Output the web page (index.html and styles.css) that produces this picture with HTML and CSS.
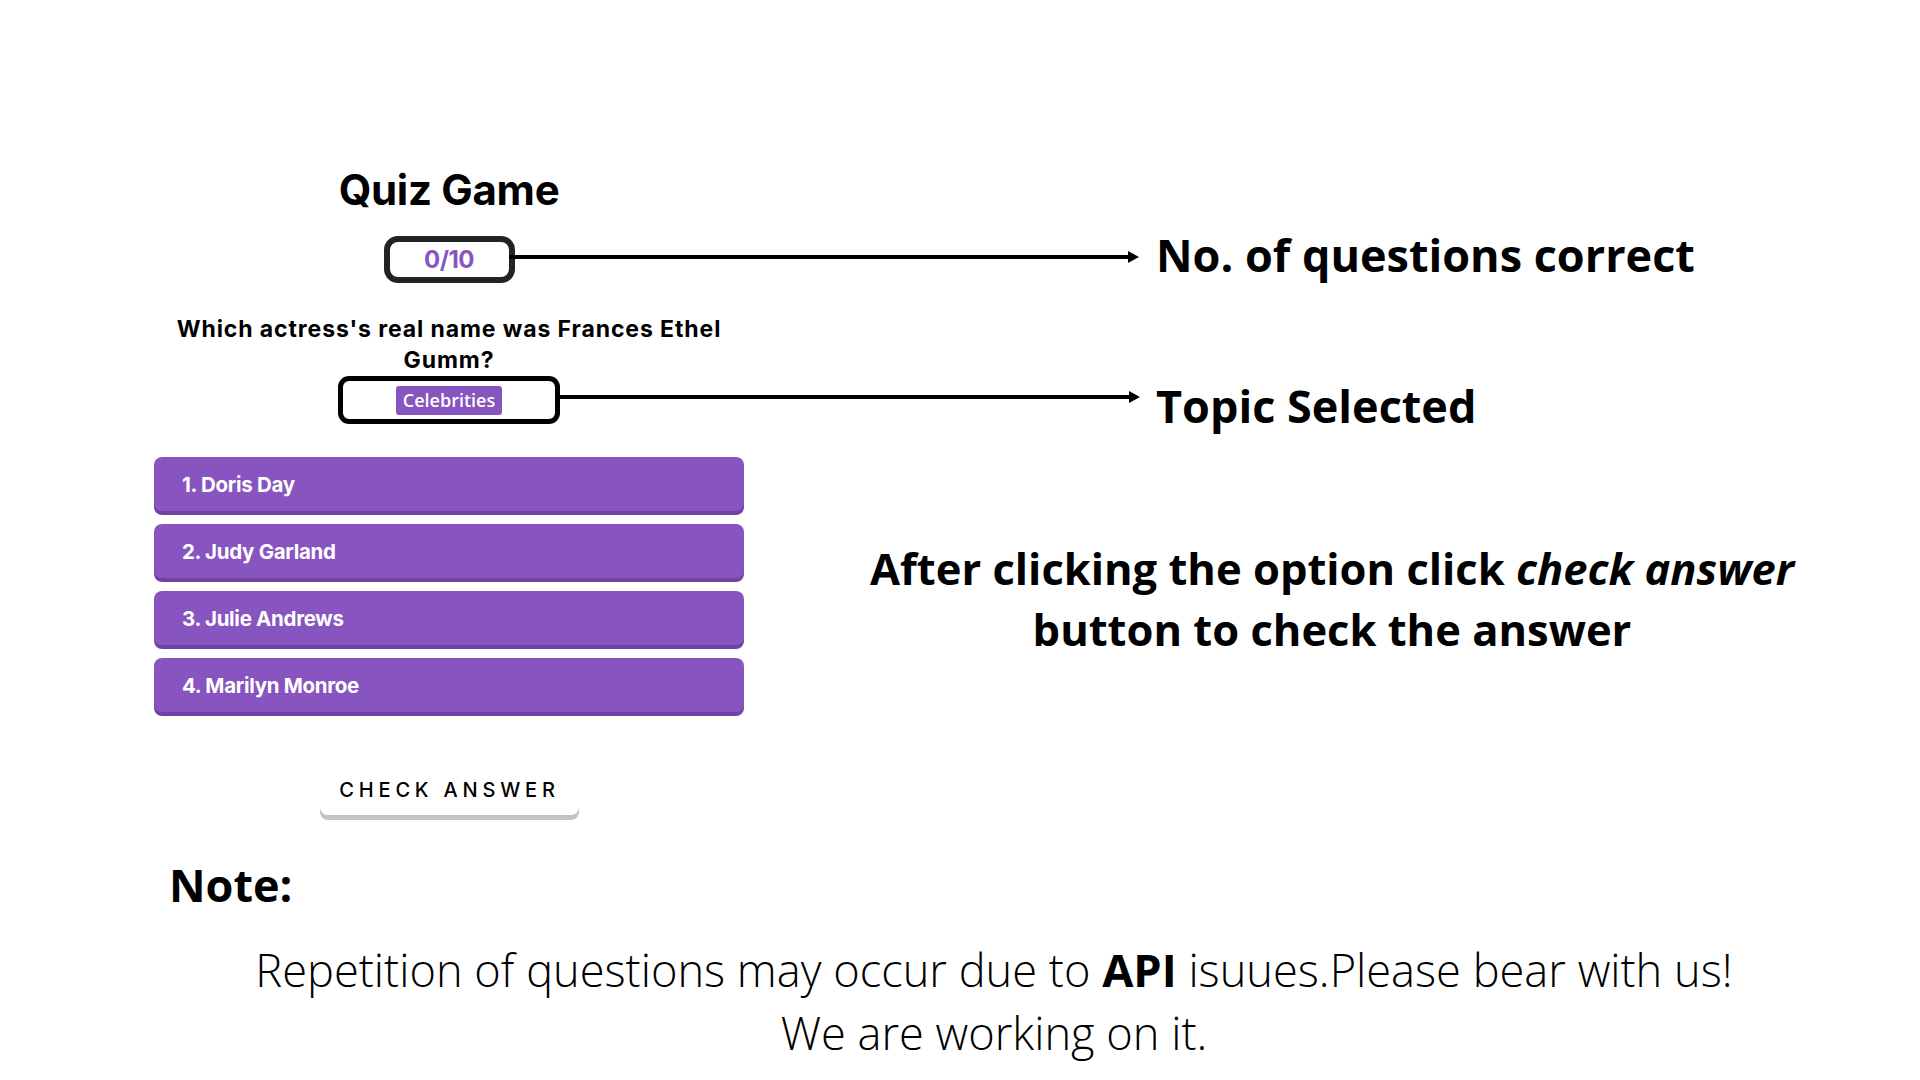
FILE: index.html
```html
<!DOCTYPE html>
<html lang="en">
<head>
<meta charset="utf-8">
<title>Quiz Game</title>
<link rel="stylesheet" href="styles.css">
</head>
<body>
<main class="page">
  <section class="quiz">
    <h1 class="quiz-title">Quiz Game</h1>

    <div class="score-cell">
      <div class="score-box arrow arrow-long">0/10</div>
    </div>
    <p class="label label-score">No. of questions correct</p>

    <p class="question">Which actress's real name was Frances Ethel<br>Gumm?</p>

    <div class="topic-cell">
      <div class="topic-box arrow arrow-short"><span class="badge">Celebrities</span></div>
    </div>
    <p class="label label-topic">Topic Selected</p>

    <ol class="options">
      <li class="option">1. Doris Day</li>
      <li class="option">2. Judy Garland</li>
      <li class="option">3. Julie Andrews</li>
      <li class="option">4. Marilyn Monroe</li>
    </ol>
    <p class="hint">After clicking the option click <em>check answer</em><br>button to check the answer</p>

    <div class="check-cell">
      <button class="check-btn" type="button">CHECK ANSWER</button>
    </div>
  </section>

  <section class="note">
    <h2 class="note-title">Note:</h2>
    <p class="note-text">Repetition of questions may occur due to <strong>API</strong> isuues.Please bear with us!<br>We are working on it.</p>
  </section>
</main>
</body>
</html>
```

FILE: styles.css
```css
* { box-sizing: border-box; }

html, body {
  margin: 0;
  padding: 0;
  background: #ffffff;
}

body {
  width: 1920px;
  height: 1080px;
  overflow: hidden;
  font-family: "Inter", "Liberation Sans", sans-serif;
  color: #000;
}

.page {
  display: flex;
  flex-direction: column;
}

.quiz {
  display: grid;
  grid-template-columns: 590px 1fr;
  margin-left: 154px;
  padding-top: 166px;
}

.quiz-title {
  grid-column: 1;
  grid-row: 1;
  margin: 0;
  font-size: 42px;
  line-height: 48px;
  font-weight: 700;
  text-align: center;
  letter-spacing: -0.3px;
}

.score-cell,
.topic-cell,
.check-cell {
  grid-column: 1;
  display: flex;
  justify-content: center;
}

.score-cell { grid-row: 2; margin-top: 22px; }

.score-box {
  width: 131px;
  height: 47px;
  border: 6px solid #222326;
  border-radius: 14px;
  display: flex;
  align-items: center;
  justify-content: center;
  color: #8854c0;
  font-size: 24px;
  font-weight: 700;
  letter-spacing: -0.5px;
}

.arrow { position: relative; }

.arrow::after {
  content: "";
  position: absolute;
  left: 100%;
  top: calc(50% - 5px);
  height: 4px;
  width: var(--arrow-len);
  background: #000;
}

.arrow::before {
  content: "";
  position: absolute;
  left: calc(100% + var(--arrow-len) - 1px);
  top: calc(50% - 9px);
  border-top: 6px solid transparent;
  border-bottom: 6px solid transparent;
  border-left: 11px solid #000;
}

.arrow-long { --arrow-len: 620px; }
.arrow-short { --arrow-len: 575px; }

.label {
  grid-column: 2;
  margin: 0 0 0 412px;
  align-self: start;
  font-family: "Open Sans", "Liberation Sans", sans-serif;
  font-weight: 700;
  font-size: 45px;
  white-space: nowrap;
}

.label-score {
  grid-row: 2;
  margin-top: 22px;
  line-height: 37px;
}

.label-topic {
  grid-row: 4;
  margin-top: 9px;
  line-height: 41px;
}

.question {
  grid-column: 1;
  grid-row: 3;
  margin: 31px 0 0;
  font-size: 23px;
  line-height: 31px;
  font-weight: 700;
  text-align: center;
  letter-spacing: 0.9px;
}

.topic-cell { grid-row: 4; margin-top: 0; }

.topic-box {
  width: 222px;
  height: 48px;
  border: 5px solid #000;
  border-radius: 11px;
  display: flex;
  align-items: center;
  justify-content: center;
}

.badge {
  display: inline-flex;
  align-items: center;
  height: 29px;
  padding: 0 7px;
  background: #8854c0;
  color: #fff;
  border-radius: 3px;
  font-family: "Open Sans", "Liberation Sans", sans-serif;
  font-size: 18px;
  font-weight: 600;
}

.options {
  grid-column: 1;
  grid-row: 5;
  list-style: none;
  margin: 31px 0 0;
  padding: 0;
  display: flex;
  flex-direction: column;
  gap: 13px;
}

.option {
  height: 54px;
  display: flex;
  align-items: center;
  padding-left: 28px;
  background: #8854c0;
  color: #fff;
  border-radius: 8px;
  box-shadow: 0 4px 0 #6e44a2;
  font-size: 20.5px;
  font-weight: 700;
  letter-spacing: -0.3px;
}

.hint {
  grid-column: 2;
  grid-row: 5;
  align-self: start;
  margin: 112px 0 0;
  text-align: center;
  font-family: "Open Sans", "Liberation Sans", sans-serif;
  font-weight: 700;
  font-size: 43.5px;
  line-height: 61px;
}

.hint em { font-style: italic; }

.check-cell { grid-row: 6; margin-top: 52px; }

.check-btn {
  width: 259px;
  height: 51px;
  padding: 0 0 0 1px;
  border: none;
  border-radius: 8px;
  background: #fff;
  box-shadow: 0 5px 0 #c4c4c4;
  font-family: "Inter", "Liberation Sans", sans-serif;
  font-size: 20px;
  font-weight: 500;
  letter-spacing: 4.8px;
  color: #000;
  cursor: pointer;
}

.note {
  padding: 43px 101px 0 169px;
  font-family: "Open Sans", "Liberation Sans", sans-serif;
}

.note-title {
  margin: 0;
  font-size: 45px;
  line-height: 54px;
  font-weight: 700;
}

.note-text {
  margin: 26px 0 0;
  text-align: center;
  font-size: 45.2px;
  line-height: 63px;
  font-weight: 300;
}

.note-text strong { font-weight: 700; }
```
